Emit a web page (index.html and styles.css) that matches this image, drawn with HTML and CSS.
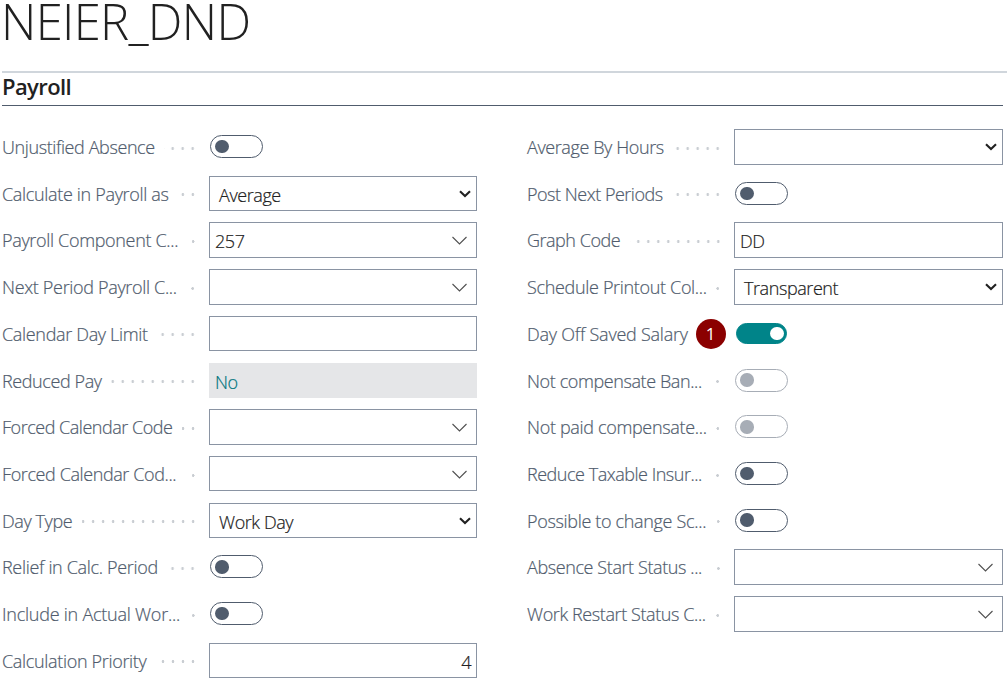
FILE: index.html
```html
<!DOCTYPE html>
<html lang="en">
<head>
<meta charset="utf-8">
<title>NEIER_DND</title>
<link rel="stylesheet" href="styles.css">
</head>
<body>
<svg class="defs" width="0" height="0">
  <symbol id="lookup" viewBox="0 0 15 9"><path d="M.5 1 7.5 8 14.5 1" fill="none" stroke="#505050" stroke-width="1.1"/></symbol>
  <symbol id="select" viewBox="0 0 12 8"><path d="M1 1.2 6 6 11 1.2" fill="none" stroke="#212121" stroke-width="2.1"/></symbol>
</svg>
<main class="page">
  <h1 class="title">NEIER_DND</h1>
  <h2 class="group">Payroll</h2>
  <div class="columns">
    <div class="column">
      <div class="field"><span class="label">Unjustified Absence</span><i class="leader"></i><span class="cell"><span class="toggle"></span></span></div>
      <div class="field"><span class="label loose">Calculate in Payroll as</span><i class="leader"></i><span class="box choice">Average<svg class="arrow"><use href="#select"/></svg></span></div>
      <div class="field"><span class="label loose">Payroll Component C...</span><i class="leader"></i><span class="box">257<svg class="lookup"><use href="#lookup"/></svg></span></div>
      <div class="field"><span class="label loose">Next Period Payroll C...</span><i class="leader"></i><span class="box"><svg class="lookup"><use href="#lookup"/></svg></span></div>
      <div class="field"><span class="label loose">Calendar Day Limit</span><i class="leader"></i><span class="box"></span></div>
      <div class="field"><span class="label">Reduced Pay</span><i class="leader"></i><span class="box readonly">No</span></div>
      <div class="field"><span class="label snug">Forced Calendar Code</span><i class="leader"></i><span class="box"><svg class="lookup"><use href="#lookup"/></svg></span></div>
      <div class="field"><span class="label">Forced Calendar Cod...</span><i class="leader"></i><span class="box"><svg class="lookup"><use href="#lookup"/></svg></span></div>
      <div class="field"><span class="label">Day Type</span><i class="leader"></i><span class="box choice">Work Day<svg class="arrow"><use href="#select"/></svg></span></div>
      <div class="field"><span class="label loose">Relief in Calc. Period</span><i class="leader"></i><span class="cell"><span class="toggle"></span></span></div>
      <div class="field"><span class="label looser">Include in Actual Wor...</span><i class="leader"></i><span class="cell"><span class="toggle"></span></span></div>
      <div class="field"><span class="label loose">Calculation Priority</span><i class="leader"></i><span class="box number">4</span></div>
    </div>
    <div class="column">
      <div class="field"><span class="label">Average By Hours</span><i class="leader"></i><span class="box choice"><svg class="arrow"><use href="#select"/></svg></span></div>
      <div class="field"><span class="label snug">Post Next Periods</span><i class="leader"></i><span class="cell"><span class="toggle"></span></span></div>
      <div class="field"><span class="label snug">Graph Code</span><i class="leader"></i><span class="box">DD</span></div>
      <div class="field"><span class="label loose">Schedule Printout Col...</span><i class="leader"></i><span class="box choice">Transparent<svg class="arrow"><use href="#select"/></svg></span></div>
      <div class="field"><span class="label looser">Day Off Saved Salary</span><i class="leader"></i><span class="marker">1</span><span class="cell"><span class="toggle on"></span></span></div>
      <div class="field"><span class="label">Not compensate Ban...</span><i class="leader"></i><span class="cell"><span class="toggle disabled"></span></span></div>
      <div class="field"><span class="label loose">Not paid compensate...</span><i class="leader"></i><span class="cell"><span class="toggle disabled"></span></span></div>
      <div class="field"><span class="label snug">Reduce Taxable Insur...</span><i class="leader"></i><span class="cell"><span class="toggle"></span></span></div>
      <div class="field"><span class="label loose">Possible to change Sc...</span><i class="leader"></i><span class="cell"><span class="toggle"></span></span></div>
      <div class="field"><span class="label">Absence Start Status ...</span><i class="leader"></i><span class="box"><svg class="lookup"><use href="#lookup"/></svg></span></div>
      <div class="field"><span class="label">Work Restart Status C...</span><i class="leader"></i><span class="box"><svg class="lookup"><use href="#lookup"/></svg></span></div>
    </div>
  </div>
</main>
</body>
</html>
```
FILE: styles.css
```css
* { box-sizing: border-box; }
body {
  margin: 0;
  height: 681px;
  overflow: hidden;
  background: #fff;
  color: #212121;
  font: 300 18px/24px "Open Sans", "Noto Sans", sans-serif;
}
.defs { display: block; position: absolute; }
.page { padding-left: 2px; }
.title {
  margin: 0 0 0 -1px;
  height: 71px;
  font-size: 49px;
  font-weight: 300;
  line-height: 43px;
  letter-spacing: -0.7px;
}
.group {
  margin: 0 4px 0 0;
  height: 35px;
  border-bottom: 1px solid #505c6d;
  font-size: 22px;
  font-weight: 600;
  line-height: 31px;
  letter-spacing: -0.6px;
  position: relative;
}
.group::before {
  content: "";
  position: absolute;
  inset: 0 -4px auto 0;
  height: 2px;
  background: #d0d6dc;
}
.columns {
  display: grid;
  grid-template-columns: 475px 476px;
  column-gap: 50px;
  padding-top: 23.05px;
}
.column { display: flex; flex-direction: column; gap: 11.2px; }
.field { display: flex; height: 35.53px; position: relative; }
.label {
  flex: none;
  color: #505c6d;
  line-height: 37.6px;
  letter-spacing: -0.4px;
  white-space: nowrap;
  -webkit-text-stroke: 0.2px currentColor;
}
.loose { letter-spacing: -0.33px; }
.looser { letter-spacing: -0.24px; }
.snug { letter-spacing: -0.48px; }
.leader {
  flex: 1;
  margin: 17.6px 14px 0 9.6px;
  height: 3px;
  background: radial-gradient(circle at 8px 1.5px, #c9cdd2 1.1px, transparent 1.6px) right top / 10px 3px repeat-x;
}
.column .box, .column .cell { flex: none; width: 268px; }
.column + .column .box, .column + .column .cell { width: 269px; }
.box {
  position: relative;
  border: 1px solid #8a94a3;
  padding: 0 5px;
  line-height: 36px;
  letter-spacing: -0.42px;
  -webkit-text-stroke: 0.2px currentColor;
}
.choice { padding-left: 9px; }
.readonly { border-color: #e5e6e8; background: #e5e6e8; color: #00757d; }
.number { text-align: right; }
.arrow { position: absolute; right: 5px; top: 13px; width: 12px; height: 8px; }
.lookup { position: absolute; right: 9px; top: 13px; width: 15px; height: 9px; }
.cell { padding: 6px 0 0 1px; }
.toggle {
  display: flex;
  align-items: center;
  width: 53px;
  height: 23px;
  padding-left: 4px;
  border: 1px solid #505c6d;
  border-radius: 12px;
}
.toggle::before {
  content: "";
  width: 13.5px;
  height: 13.5px;
  border-radius: 50%;
  background: #505c6d;
}
.toggle.disabled { border-color: #a7adb6; }
.toggle.disabled::before { background: #a7adb6; }
.toggle.on {
  width: 51px;
  height: 21px;
  margin: 1px;
  padding-left: 33px;
  background: #008489;
  border-color: #008489;
}
.toggle.on::before { background: #fff; }
.marker {
  position: absolute;
  left: 168.5px;
  top: 3px;
  width: 30px;
  height: 30px;
  border-radius: 50%;
  background: #8b0000;
  color: #fff;
  font-size: 17px;
  font-weight: 500;
  line-height: 29px;
  text-align: center;
}
```
